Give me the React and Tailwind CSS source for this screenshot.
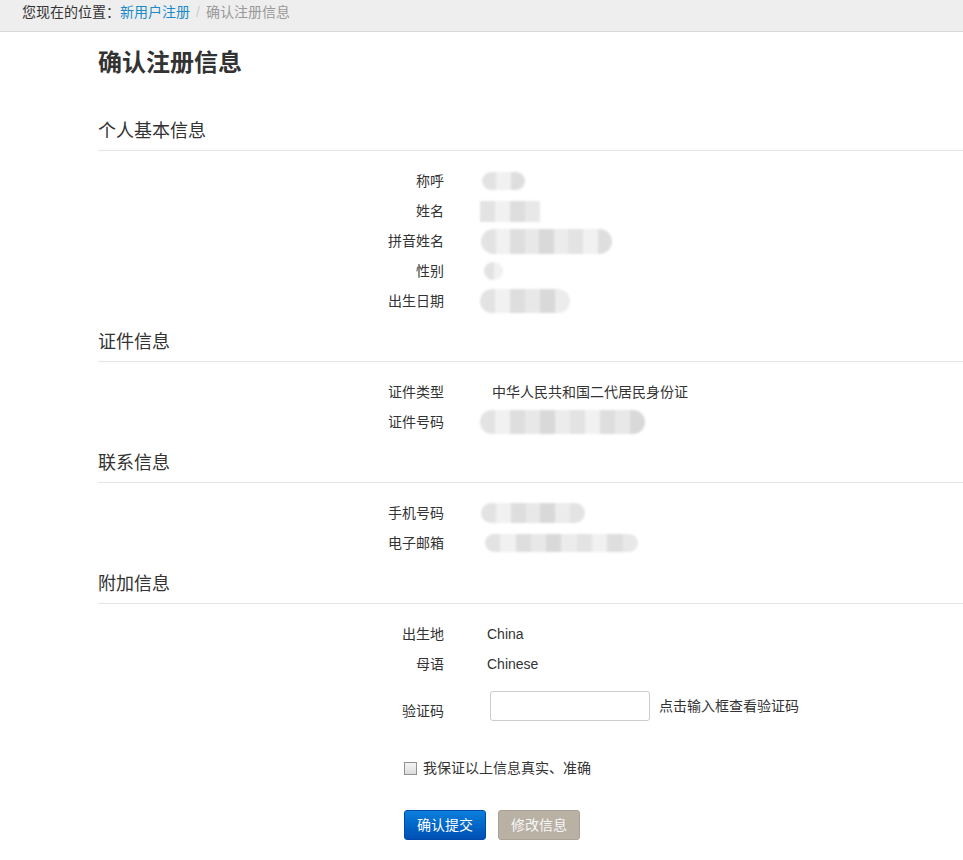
import React from 'react';

// greys for the pixelated (masked) values
const shades = ['bg-[#f1f1f1]', 'bg-[#e3e3e3]', 'bg-[#ececec]', 'bg-[#d9d9d9]', 'bg-[#e8e8e8]', 'bg-[#dedede]'];

function Blob({ size, cells, offset }) {
  return (
    <div className={`flex overflow-hidden rounded-full blur-[1px] ${size} ${offset}`}>
      {Array.from({ length: cells }).map((_, i) => (
        <div key={i} className={`h-full flex-1 ${shades[(i * 5 + 1) % shades.length]}`}></div>
      ))}
    </div>
  );
}

function Row({ label, children }) {
  return (
    <div className="flex h-[30px] items-center">
      <div className="w-[346px] shrink-0 text-right">{label}</div>
      <div className="flex items-center pl-[38px]">{children}</div>
    </div>
  );
}

function Heading({ title, first }) {
  return (
    <div className={`border-b border-[#e5e5e5] pb-[9px] text-[18px] leading-[20px] text-[#333] ${first ? 'mt-[41px]' : 'mt-[16px]'}`}>
      {title}
    </div>
  );
}

export default function App() {
  return (
    <div className="min-h-[860px] bg-white font-['Liberation_Sans','Noto_Sans_CJK_SC',sans-serif] text-[14px] text-[#333]">
      <div className="h-[32px] border-b border-[#d9d9d9] bg-[#eeeeee] px-[22px] pt-[2px] leading-[20px]">
        <span>您现在的位置：</span>
        <span className="text-[#1a8ac9]">新用户注册</span>
        <span className="mx-[6px] text-[#cccccc]">/</span>
        <span className="text-[#999999]">确认注册信息</span>
      </div>

      <div className="ml-[98px]">
        <h1 className="mt-[14px] text-[24px] font-bold leading-[34px] text-[#333]">确认注册信息</h1>

        <Heading title="个人基本信息" first />
        <div className="pt-[15px]">
          <Row label="称呼"><Blob size="w-[43px] h-[18px]" cells={3} offset="ml-0" /></Row>
          <Row label="姓名"><Blob size="w-[60px] h-[21px] rounded-none" cells={4} offset="-ml-[2px]" /></Row>
          <Row label="拼音姓名"><Blob size="w-[131px] h-[25px]" cells={9} offset="-ml-[1px]" /></Row>
          <Row label="性别"><Blob size="w-[19px] h-[18px]" cells={2} offset="ml-[2px]" /></Row>
          <Row label="出生日期"><Blob size="w-[90px] h-[24px]" cells={6} offset="-ml-[2px]" /></Row>
        </div>

        <Heading title="证件信息" />
        <div className="pt-[15px]">
          <Row label="证件类型"><span className="ml-[10px]">中华人民共和国二代居民身份证</span></Row>
          <Row label="证件号码"><Blob size="w-[165px] h-[24px]" cells={11} offset="-ml-[2px]" /></Row>
        </div>

        <Heading title="联系信息" />
        <div className="pt-[15px]">
          <Row label="手机号码"><Blob size="w-[104px] h-[20px]" cells={7} offset="-ml-[1px]" /></Row>
          <Row label="电子邮箱"><Blob size="w-[153px] h-[18px]" cells={10} offset="ml-[3px]" /></Row>
        </div>

        <Heading title="附加信息" />
        <div className="pt-[15px]">
          <Row label="出生地"><span className="ml-[5px]">China</span></Row>
          <Row label="母语"><span className="ml-[5px]">Chinese</span></Row>
          <div className="mt-[12px] flex items-start">
            <div className="mt-[5px] w-[346px] shrink-0 text-right leading-[30px]">验证码</div>
            <input
              type="text"
              className="ml-[46px] h-[30px] w-[160px] rounded-[3px] border border-[#cccccc] bg-white px-2 outline-none"
            />
            <span className="ml-[9px] leading-[30px]">点击输入框查看验证码</span>
          </div>

          <label className="ml-[306px] mt-[32px] flex items-center leading-[20px]">
            <span className="h-[13px] w-[13px] border border-[#909090] bg-linear-to-b from-[#f4f4f4] to-[#dcdcdc]"></span>
            <span className="ml-[6px]">我保证以上信息真实、准确</span>
          </label>

          <div className="ml-[306px] mt-[32px] flex gap-[12px]">
            <button className="h-[30px] w-[82px] rounded-[3px] border border-[#0049a8] bg-linear-to-b from-[#0c7fdc] to-[#004fb4] text-white">
              确认提交
            </button>
            <button className="h-[30px] w-[82px] rounded-[3px] border border-[#aaa195] bg-[#bab1a5] text-[#f7f7f7]">
              修改信息
            </button>
          </div>
        </div>
      </div>
    </div>
  );
}
